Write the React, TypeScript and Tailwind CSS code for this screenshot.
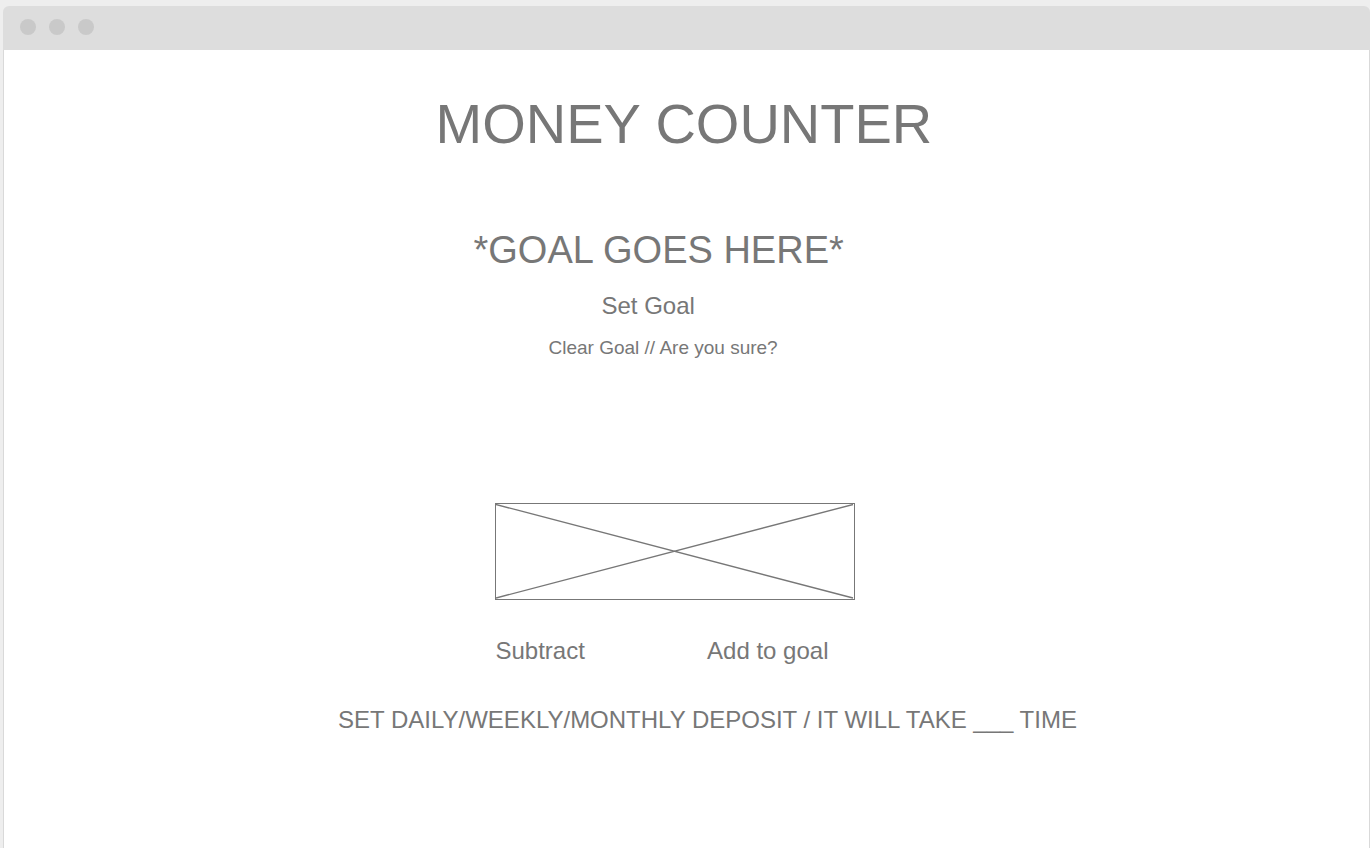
const actionClass = "cursor-pointer whitespace-nowrap text-left";

function TitleBar() {
  return (
    <header className="flex h-11 items-start gap-[13px] rounded-t-md bg-[#dddddd] px-[17px] pt-[13px]">
      <span className="size-4 rounded-full bg-[#c9c9c9]" />
      <span className="size-4 rounded-full bg-[#c9c9c9]" />
      <span className="size-4 rounded-full bg-[#c9c9c9]" />
    </header>
  );
}

function Placeholder() {
  return (
    <div className="mt-[143px] ml-[165px] h-[97px] w-[360px] border border-[#777777]">
      <svg
        className="block size-full"
        viewBox="0 0 358 95"
        preserveAspectRatio="none"
        stroke="#777777"
        strokeWidth="1.4"
        aria-hidden="true"
      >
        <path d="M0 .5 357 94M0 94 357 .5" fill="none" />
      </svg>
    </div>
  );
}

export default function App() {
  return (
    <div className="flex min-h-screen flex-col bg-[#eeeeee] pt-[6px] pl-[3px] font-['Liberation_Sans',Arial,sans-serif] text-[#777777]">
      <TitleBar />
      <main className="flex grow justify-center border-x border-[#d9d9d9] bg-white pl-[42px]">
        <div className="flex w-[756px] flex-col items-start pb-10">
          <h1 className="mt-[42px] ml-[106px] text-[56px] leading-[64px] whitespace-nowrap">MONEY COUNTER</h1>
          <h2 className="mt-[72px] ml-[144px] text-[38px] leading-[44px] whitespace-nowrap">*GOAL GOES HERE*</h2>
          <button type="button" className={`${actionClass} mt-5 ml-[272px] text-[24px] leading-7`}>
            Set Goal
          </button>
          <button type="button" className={`${actionClass} mt-4 ml-[219px] text-[19px] leading-6`}>
            Clear Goal // Are you sure?
          </button>
          <Placeholder />
          <div className="mt-[37px] ml-[166px] flex w-[333px] justify-between">
            <button type="button" className={`${actionClass} text-[24px] leading-7`}>
              Subtract
            </button>
            <button type="button" className={`${actionClass} text-[24px] leading-7`}>
              Add to goal
            </button>
          </div>
          <p className="mt-[41px] self-center text-[24px] leading-7 whitespace-nowrap">
            SET DAILY/WEEKLY/MONTHLY DEPOSIT / IT WILL TAKE ___ TIME
          </p>
        </div>
      </main>
    </div>
  );
}
